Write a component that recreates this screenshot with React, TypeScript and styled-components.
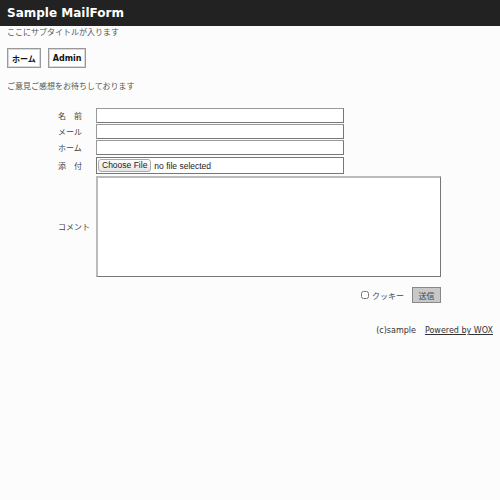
import styled, { createGlobalStyle } from "styled-components";

const GlobalStyle = createGlobalStyle`
  html, body {
    margin: 0;
    padding: 0;
    background: #fcfcfc;
  }
  body {
    font-family: "DejaVu Sans", "Noto Sans CJK JP", sans-serif;
    color: #444;
  }
`;

export default function App() {
    return (
        <>
            <GlobalStyle />
            <Header>
                <Title>Sample MailForm</Title>
            </Header>
            <SubTitle>ここにサブタイトルが入ります</SubTitle>
            <Nav>
                <NavButton href="#">ホーム</NavButton>
                <NavButton href="#">Admin</NavButton>
            </Nav>
            <Message>ご意見ご感想をお待ちしております</Message>
            <Form onSubmit={(e) => e.preventDefault()}>
                <Label>名　前</Label>
                <TextInput type="text" />
                <Label>メール</Label>
                <TextInput type="text" />
                <Label>ホーム</Label>
                <TextInput type="text" />
                <Label>添　付</Label>
                <FileBox>
                    <ChooseButton type="button">Choose File</ChooseButton>
                    <FileName>no file selected</FileName>
                </FileBox>
                <Label>コメント</Label>
                <Comment />
                <Actions>
                    <CookieLabel>
                        <Check type="checkbox" />
                        クッキー
                    </CookieLabel>
                    <SubmitButton type="submit">送信</SubmitButton>
                </Actions>
            </Form>
            <Footer>
                <span>(c)sample</span>
                <FooterLink href="#">Powered by WOX</FooterLink>
            </Footer>
        </>
    );
}

const Header = styled.header`
  height: 26px;
  background: #222;
  padding-left: 7px;
  display: flex;
  align-items: center;
`;

const Title = styled.h1`
  margin: 0;
  font-family: "DejaVu Sans", sans-serif;
  font-size: 12px;
  font-weight: bold;
  color: #fff;
`;

const SubTitle = styled.p`
  margin: 0 0 0 7px;
  font-family: "Noto Sans CJK JP", sans-serif;
  font-size: 8px;
  line-height: 11px;
  color: #555;
`;

const Nav = styled.nav`
  display: flex;
  gap: 7px;
  margin: 11px 0 0 7px;
`;

const NavButton = styled.a`
  display: flex;
  align-items: center;
  height: 20px;
  box-sizing: border-box;
  padding: 0 4px;
  border: 1px solid #999;
  box-shadow: inset 0 0 0 1px #d8d8d8;
  background: #fff;
  font-family: "DejaVu Sans", "Noto Sans CJK JP", sans-serif;
  font-size: 8px;
  font-weight: bold;
  color: #111;
  text-decoration: none;
`;

const Message = styled.p`
  margin: 12px 0 0 7px;
  font-family: "Noto Sans CJK JP", sans-serif;
  font-size: 8px;
  line-height: 11px;
  color: #555;
`;

const Form = styled.form`
  display: grid;
  grid-template-columns: 38px 345px;
  row-gap: 1px;
  align-items: center;
  margin: 17px 0 0 58px;
`;

const Label = styled.label`
  font-family: "Noto Sans CJK JP", sans-serif;
  font-size: 8px;
  color: #444;
  white-space: nowrap;
`;

const TextInput = styled.input`
  width: 248px;
  height: 15px;
  box-sizing: border-box;
  margin: 0;
  padding: 0 2px;
  border: 1px solid;
  border-color: #999 #777 #777 #999;
  background: #fff;
  outline: none;
`;

const FileBox = styled.div`
  width: 248px;
  height: 17px;
  box-sizing: border-box;
  margin-top: 1px;
  display: flex;
  align-items: center;
  gap: 3px;
  padding-left: 1px;
  border: 1px solid #777;
  background: #fff;
`;

const ChooseButton = styled.button`
  height: 13px;
  margin: 0;
  padding: 0 3px;
  border: 1px solid #aaa;
  border-radius: 3px;
  background: linear-gradient(#fdfdfd, #e6e6e6);
  font-family: "Liberation Sans", sans-serif;
  font-size: 8.5px;
  line-height: 11px;
  color: #222;
`;

const FileName = styled.span`
  font-family: "Liberation Sans", sans-serif;
  font-size: 8.5px;
  color: #222;
`;

const Comment = styled.textarea`
  width: 345px;
  height: 101px;
  box-sizing: border-box;
  margin: 1px 0 0;
  padding: 2px;
  border: 1px solid;
  border-width: 2px 1px 1px 2px;
  border-color: #bbb #777 #777 #bbb;
  background: #fff;
  resize: none;
  outline: none;
`;

const Actions = styled.div`
  grid-column: 2;
  display: flex;
  justify-content: flex-end;
  align-items: center;
  gap: 8px;
  margin-top: 9px;
`;

const CookieLabel = styled.label`
  display: flex;
  align-items: center;
  gap: 3px;
  font-family: "Noto Sans CJK JP", sans-serif;
  font-size: 8px;
  color: #444;
`;

const Check = styled.input`
  width: 8px;
  height: 8px;
  margin: 0;
`;

const SubmitButton = styled.button`
  width: 29px;
  height: 16px;
  margin: 0;
  padding: 0;
  border: 1px solid #888;
  background: #c8c8c8;
  font-family: "Noto Sans CJK JP", sans-serif;
  font-size: 8px;
  color: #444;
`;

const Footer = styled.footer`
  display: flex;
  justify-content: flex-end;
  gap: 9px;
  margin: 23px 7px 0 0;
  font-family: "DejaVu Sans", sans-serif;
  font-size: 8px;
  color: #333;
`;

const FooterLink = styled.a`
  color: #333;
  text-decoration: underline;
`;
